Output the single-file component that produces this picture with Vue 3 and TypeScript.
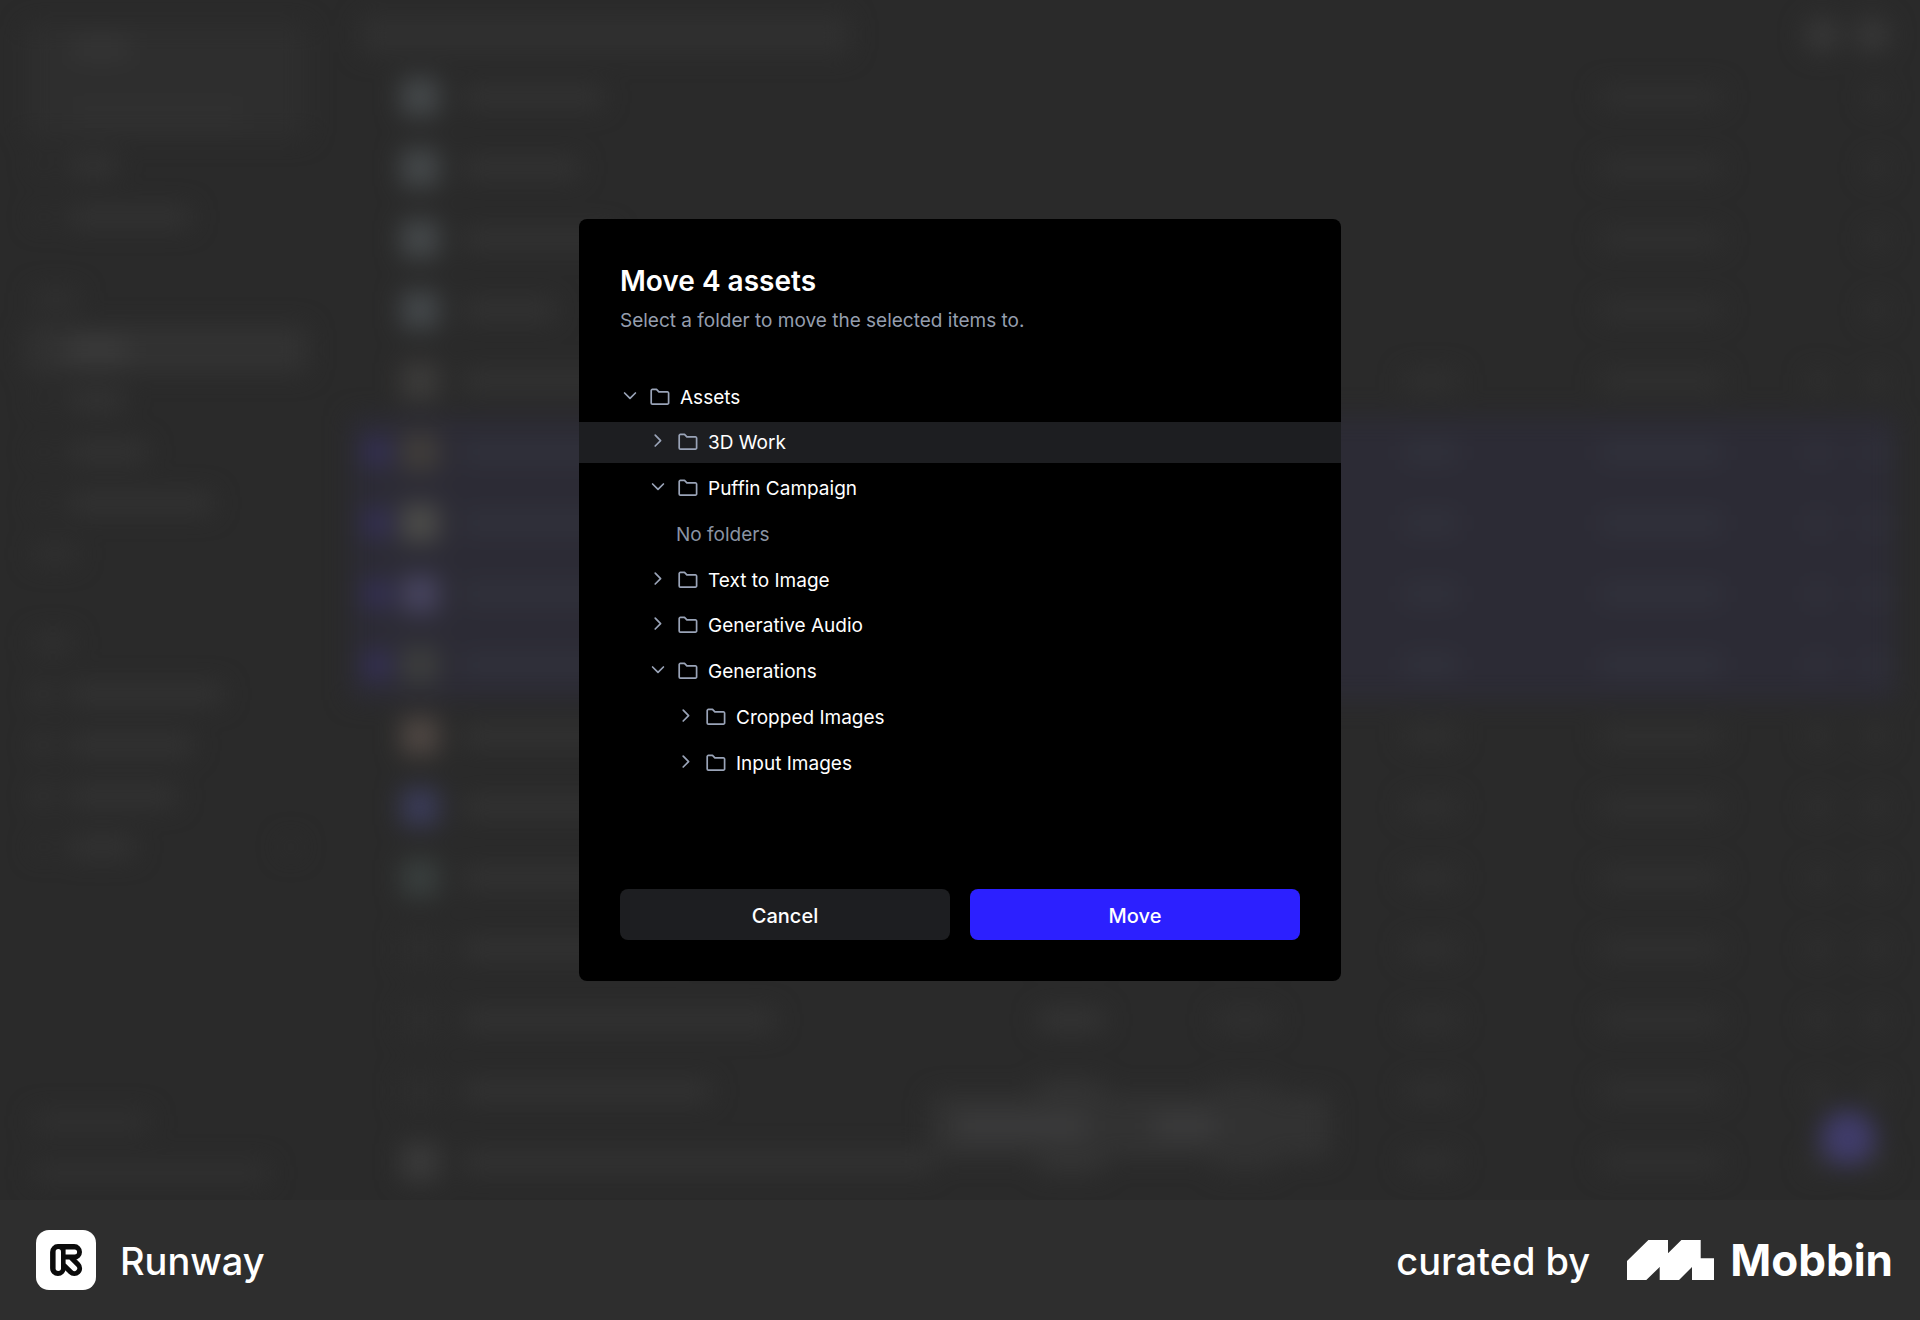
<script setup lang="ts">
import { computed, ref } from 'vue'

interface TreeRow {
  label: string
  depth: number
  open?: boolean
  empty?: boolean
}

interface NavRow {
  kind: 'label' | 'item'
  width: number
  active?: boolean
  icon?: boolean
  plus?: boolean
}

interface AssetRow {
  thumb: string
  name: number
  selected: boolean
  file: boolean
}

const tree: TreeRow[] = [
  { label: 'Assets', depth: 0, open: true },
  { label: '3D Work', depth: 1 },
  { label: 'Puffin Campaign', depth: 1, open: true },
  { label: 'No folders', depth: 2, empty: true },
  { label: 'Text to Image', depth: 1 },
  { label: 'Generative Audio', depth: 1 },
  { label: 'Generations', depth: 1, open: true },
  { label: 'Cropped Images', depth: 2 },
  { label: 'Input Images', depth: 2 },
]

const target = ref('3D Work')

const navGroups: NavRow[][] = [
  [
    { kind: 'item', width: 48 },
    { kind: 'item', width: 122 },
  ],
  [
    { kind: 'label', width: 46 },
    { kind: 'item', width: 58, active: true },
    { kind: 'item', width: 56 },
    { kind: 'item', width: 78 },
    { kind: 'item', width: 144 },
    { kind: 'label', width: 44 },
  ],
  [
    { kind: 'label', width: 40 },
    { kind: 'item', width: 154, icon: true },
    { kind: 'item', width: 124, icon: true },
    { kind: 'item', width: 108, icon: true },
    { kind: 'item', width: 66, plus: true },
  ],
]

const thumbs = [
  '#45494b', '#45494b', '#45494b', '#44484b',
  '#3c3b3a', '#403d3a', '#4c4c49', '#46435e',
  '#3c3d3d', '#4f4743', '#3a3b58', '#393f3e',
  '#2d2d2d', '#2d2d2d', '#2d2d2d', '#3a3a3a',
]
const nameWidths = [140, 116, 150, 92, 160, 250, 240, 260, 250, 180, 170, 190, 220, 312, 248, 470]

const assets = computed<AssetRow[]>(() =>
  thumbs.map((thumb, i) => ({
    thumb,
    name: nameWidths[i],
    selected: i >= 5 && i <= 8,
    file: i >= 4,
  })),
)
</script>

<template>
  <div class="page">
    <main class="stage">
      <div class="backdrop" aria-hidden="true">
        <div class="sidebar">
          <div class="workspace">
            <div class="bar short"></div>
            <div class="bar wide"></div>
          </div>
          <div v-for="(group, g) in navGroups" :key="g" class="group">
            <div v-for="(row, r) in group" :key="r" class="nav" :class="[row.kind, { active: row.active }]">
              <i v-if="row.kind === 'item'" class="glyph" :class="{ solid: row.icon }"></i>
              <i class="bar" :style="{ width: row.width + 'px' }"></i>
              <i v-if="row.plus" class="glyph end"></i>
            </div>
          </div>
          <div class="usage">
            <div class="nav label"><i class="bar plan"></i></div>
            <div class="nav label"><i class="bar quota"></i></div>
          </div>
        </div>
        <div class="content">
          <div class="topbar">
            <div class="search"></div>
            <div class="avatars"><i></i><i></i></div>
          </div>
          <div v-for="(row, i) in assets" :key="i" class="asset" :class="{ selected: row.selected }">
            <i class="tick"></i>
            <i class="thumb" :style="{ background: row.thumb }"></i>
            <div class="name"><i class="bar" :style="{ width: row.name + 'px' }"></i></div>
            <div class="cell type"><i v-if="row.file" class="bar"></i></div>
            <div class="cell size"><i v-if="row.file" class="bar"></i></div>
            <div class="cell length"><i v-if="row.file" class="bar"></i></div>
            <div class="cell date"><i class="bar"></i></div>
            <div class="cell star"><i v-if="row.file" class="bar"></i></div>
            <div class="cell more"><i class="bar"></i></div>
          </div>
        </div>
        <div class="toolbar"><i></i><i></i></div>
        <div class="bubble"></div>
      </div>

      <section class="dialog" role="dialog" aria-modal="true" aria-labelledby="dialog-title">
        <header class="head">
          <h1 id="dialog-title">Move 4 assets</h1>
          <p>Select a folder to move the selected items to.</p>
        </header>

        <ul class="tree">
          <li
            v-for="row in tree"
            :key="row.label"
            class="node"
            :class="['depth-' + row.depth, { current: row.label === target }]"
          >
            <span v-if="row.empty" class="none">{{ row.label }}</span>
            <button v-else type="button" class="pick" @click="target = row.label">
              <svg class="chevron" viewBox="0 0 20 20" aria-hidden="true">
                <path v-if="row.open" d="M4.600 6 10 11.400l5.400-5.400" />
                <path v-else d="M7.200 3.200l5.400 5.400-5.400 5.400" />
              </svg>
              <svg class="folder" viewBox="0 0 20 18" aria-hidden="true">
                <path d="M1.200 2.600a1.200 1.200 0 0 1 1.200-1.200h4.100l2.400 2.500h8.500a1.200 1.200 0 0 1 1.200 1.200v9.800a1.200 1.200 0 0 1-1.200 1.200h-15a1.200 1.200 0 0 1-1.200-1.200z" />
              </svg>
              <span class="label">{{ row.label }}</span>
            </button>
          </li>
        </ul>

        <footer class="actions">
          <button type="button" class="btn">Cancel</button>
          <button type="button" class="btn primary">Move</button>
        </footer>
      </section>
    </main>

    <footer class="credits">
      <div class="brand">
        <svg class="app-icon" viewBox="0 0 60 60" aria-hidden="true">
          <rect width="60" height="60" rx="13" fill="#fff" />
          <g fill="none" stroke="#0b0b0b" stroke-width="15.600" stroke-linecap="round">
            <path d="M21.900 38.200V21.900H38.200" stroke-linejoin="round" />
            <path d="M30 30l8.300 8.300" />
          </g>
          <path d="M22.300 21.800v16.400" fill="none" stroke="#fff" stroke-width="5.400" stroke-linecap="round" />
          <path d="M29.600 19.400h9a2.500 2.500 0 0 1 0 5h-9z" fill="#fff" />
          <path d="M29.600 29.400h3.800l7 7a2.700 2.700 0 0 1-3.900 3.900l-6.900-6.900z" fill="#fff" />
        </svg>
        <span class="app-name">Runway</span>
      </div>
      <div class="source">
        <span class="by">curated by</span>
        <svg class="mark" viewBox="0 0 87 40" aria-hidden="true">
          <path d="M21.400 0H41v13.300L54.400 0h19.300v18.300H87V40H65V27L52 40H32.700V27l-13.400 13H0V21z" fill="#fff" />
        </svg>
        <span class="mobbin">Mobbin</span>
      </div>
    </footer>
  </div>
</template>

<style>
body {
  margin: 0;
  background: #2e2e2e;
}
</style>

<style scoped>
.page {
  min-height: 100vh;
  display: flex;
  flex-direction: column;
  background: #2e2e2e;
  color: #fff;
  font-family: Inter, "Liberation Sans", sans-serif;
}

.stage {
  flex: 1;
  position: relative;
  display: flex;
  align-items: center;
  justify-content: center;
  background: #2a2a2a;
  overflow: hidden;
}

/* Page behind the dialog */
.backdrop {
  position: absolute;
  inset: 0;
  display: flex;
  overflow: hidden;
  filter: blur(12px);
}

.bar {
  display: block;
  height: 20px;
  border-radius: 4px;
  background: #333;
}

.sidebar {
  width: 340px;
  flex: none;
  box-sizing: border-box;
  padding: 24px 32px 0 25px;
  display: flex;
  flex-direction: column;
}

.workspace {
  height: 114px;
  box-sizing: border-box;
  padding: 14px 48px;
  display: flex;
  flex-direction: column;
  justify-content: space-between;
  background: #2e2e2e;
  border-radius: 8px;
}

.workspace .short {
  width: 56px;
  background: #363636;
}

.workspace .wide {
  width: 170px;
  background: #313131;
}

.plan {
  width: 116px;
}

.quota {
  width: 236px;
}

.group:nth-of-type(3) {
  margin-top: 27px;
}

.group:nth-of-type(4) {
  margin-top: 34px;
}

.usage {
  margin-top: auto;
}

.nav {
  height: 47px;
  margin: 4px 0;
  padding: 0 8px;
  box-sizing: border-box;
  display: flex;
  align-items: center;
  gap: 18px;
  border-radius: 8px;
}

.nav.label .bar {
  background: #303030;
}

.nav.active {
  background: #323232;
}

.nav.active .bar {
  background: #3c3c3c;
}

.glyph {
  width: 18px;
  height: 18px;
  border-radius: 50%;
  background: #2e2e2e;
}

.glyph.solid {
  background: #373737;
}

.glyph.end {
  margin-left: auto;
}

.content {
  flex: 1;
  padding: 0 24px 0 10px;
  display: flex;
  flex-direction: column;
}

.topbar {
  height: 53px;
  padding: 8px 6px 0 10px;
  display: flex;
  align-items: center;
  justify-content: space-between;
}

.search {
  width: 490px;
  height: 38px;
  border-radius: 8px;
  background: #303030;
}

.avatars {
  display: flex;
  gap: 14px;
}

.avatars i {
  width: 36px;
  height: 36px;
  border-radius: 50%;
  background: #373737;
}

.asset {
  height: 71px;
  padding-left: 14px;
  box-sizing: border-box;
  display: flex;
  align-items: center;
}

.asset.selected {
  background: #2c2b35;
}

.tick {
  width: 26px;
  height: 26px;
  border-radius: 4px;
}

.selected .tick {
  background: #353058;
}

.thumb {
  width: 38px;
  height: 38px;
  margin: 0 24px 0 11px;
  border-radius: 4px;
}

.name {
  flex: 1;
}

.cell {
  flex: none;
}

.cell .bar {
  background: #303030;
}

.selected .bar {
  background: #31323c;
}

.type {
  width: 176px;
}

.type .bar {
  width: 66px;
  background: #353535;
}

.size {
  width: 190px;
}

.size .bar {
  width: 62px;
}

.length {
  width: 196px;
}

.length .bar {
  width: 54px;
}

.date {
  width: 208px;
}

.date .bar {
  width: 122px;
}

.star {
  width: 58px;
}

.more {
  width: 30px;
}

.star .bar,
.more .bar {
  width: 20px;
}

.toolbar {
  position: absolute;
  right: 590px;
  bottom: 42px;
  width: 400px;
  height: 64px;
  box-sizing: border-box;
  padding: 0 26px;
  display: flex;
  align-items: center;
  gap: 68px;
  border-radius: 10px;
  background: #323232;
}

.toolbar i {
  width: 130px;
  height: 22px;
  background: #3c3c3d;
}

.toolbar i + i {
  width: 62px;
}

.bubble {
  position: absolute;
  right: 44px;
  bottom: 34px;
  width: 56px;
  height: 56px;
  border-radius: 50%;
  background: #403c6a;
}

/* Dialog */
.dialog {
  position: relative;
  width: 762px;
  min-height: 762px;
  box-sizing: border-box;
  padding: 42px 0 41px;
  display: flex;
  flex-direction: column;
  border-radius: 8px;
  background: #000;
}

.head {
  padding: 0 41px;
}

h1 {
  margin: 0;
  font-size: 28px;
  line-height: 40px;
  font-weight: 600;
}

p {
  margin: 6px 0 0;
  font-size: 19px;
  line-height: 28px;
  font-weight: 400;
  color: #959eae;
}

.tree {
  height: 407px;
  margin: 41px 0 0;
  padding: 0;
  display: flex;
  flex-direction: column;
  justify-content: space-between;
  list-style: none;
  font-size: 19px;
  font-weight: 400;
}

.node {
  height: 41px;
  display: flex;
}

.node.current {
  background: #1d1e21;
}

.pick,
.none {
  flex: 1;
  display: flex;
  align-items: center;
  padding: 0 41px;
  font: inherit;
  line-height: 20px;
}

.pick {
  border: 0;
  background: none;
  color: #fff;
  text-align: left;
}

.depth-1 .pick {
  padding-left: 69px;
}

.depth-2 .pick,
.none {
  padding-left: 97px;
}

.none {
  padding-top: 2px;
  color: #8a93a3;
}

.chevron {
  width: 20px;
  height: 20px;
  margin-right: 10px;
}

.folder {
  width: 20px;
  height: 18px;
  margin-right: 10px;
}

.chevron path,
.folder path {
  fill: none;
  stroke: #9aa4b8;
  stroke-width: 1.7;
  stroke-linejoin: round;
  stroke-linecap: round;
}

/* The line box is shorter than the glyphs, so descenders are trimmed */
.pick .label {
  padding-top: 2px;
  overflow: hidden;
}

.actions {
  margin-top: auto;
  padding: 0 41px;
  display: flex;
  gap: 20px;
}

.btn {
  flex: 1;
  height: 51px;
  padding: 2px 0 0;
  border: 0;
  border-radius: 8px;
  background: #1d1e21;
  color: #fff;
  font: 500 20px/28px Inter, "Liberation Sans", sans-serif;
}

.btn.primary {
  background: #2c20ff;
}

/* Credits strip */
.credits {
  height: 120px;
  padding: 0 27px 0 36px;
  display: flex;
  align-items: center;
  justify-content: space-between;
}

.brand,
.source {
  display: flex;
  align-items: center;
}

.app-icon {
  width: 60px;
  height: 60px;
  margin-right: 24px;
}

.app-name,
.by {
  padding-top: 2px;
  font-size: 38px;
  line-height: 48px;
  font-weight: 500;
}

.mark {
  width: 87px;
  height: 40px;
  margin: 0 16px 0 37px;
}

.mobbin {
  font-size: 44px;
  line-height: 48px;
  font-weight: 700;
}
</style>
